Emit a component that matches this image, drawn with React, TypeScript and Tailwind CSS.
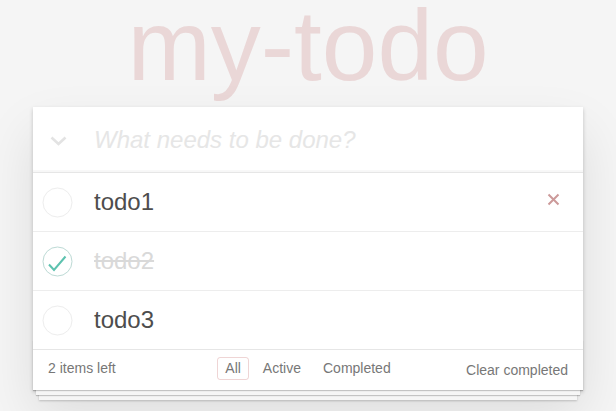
import { useState } from "react";

type Todo = { id: number; title: string; completed: boolean };

export default function App() {
  const [todos, setTodos] = useState<Todo[]>([
    { id: 1, title: "todo1", completed: false },
    { id: 2, title: "todo2", completed: true },
    { id: 3, title: "todo3", completed: false },
  ]);
  // the first row is shown in its hover state
  const [hovered, setHovered] = useState(1);

  const left = todos.filter((t) => !t.completed).length;

  const toggle = (id: number) =>
    setTodos(todos.map((t) => (t.id === id ? { ...t, completed: !t.completed } : t)));

  return (
    <div className="min-h-[416px] bg-[#f5f5f5] font-['Liberation_Sans',Arial,sans-serif] text-[#4d4d4d]">
      <h1 className="-mt-[5px] text-center text-[100px] leading-[100px] font-normal text-[rgba(175,47,47,0.15)]">
        my-todo
      </h1>

      <section className="relative mx-auto mt-[12px] w-[550px] bg-white shadow-[0_2px_4px_0_rgba(0,0,0,0.2),0_25px_50px_0_rgba(0,0,0,0.1)]">
        {/* New todo input */}
        <header className="flex h-[65px] items-center shadow-[inset_0_-2px_1px_rgba(0,0,0,0.03)]">
          <div className="flex w-[60px] shrink-0 pl-[17px] pt-[2px]">
            <svg width="17" height="10" viewBox="0 0 17 10">
              <polyline
                points="1.5,1.5 8.5,8 15.5,1.5"
                fill="none"
                stroke="#e3e3e3"
                strokeWidth="2.6"
              />
            </svg>
          </div>
          <input
            className="h-full w-full bg-transparent pl-[1px] pr-4 text-[24px] leading-[33.6px] text-[#4d4d4d] outline-none placeholder:italic placeholder:text-[#e6e6e6]"
            placeholder="What needs to be done?"
          />
        </header>

        {/* Todo list */}
        <ul className="border-t border-[#e6e6e6]">
          {todos.map((todo, i) => (
            <li
              key={todo.id}
              onMouseEnter={() => setHovered(todo.id)}
              className={`flex items-center ${
                i < todos.length - 1 ? "h-[59px] border-b border-[#ededed]" : "h-[58px]"
              }`}
            >
              <div className="w-[60px] shrink-0 pl-[9px]">
                <svg width="31" height="31" viewBox="0 0 31 31" onClick={() => toggle(todo.id)}>
                  <circle
                    cx="15.5"
                    cy="15.5"
                    r="14.5"
                    fill="none"
                    stroke={todo.completed ? "#bddad5" : "#ededed"}
                    strokeWidth="1"
                  />
                  {todo.completed && (
                    <polyline
                      points="7,18.5 12,24 23.5,10.5"
                      fill="none"
                      stroke="#5dc2af"
                      strokeWidth="2"
                    />
                  )}
                </svg>
              </div>
              <label
                className={`flex-1 pl-[1px] text-[24px] leading-[28.8px] ${
                  todo.completed ? "text-[#d9d9d9] line-through" : "text-[#4d4d4d]"
                }`}
              >
                {todo.title}
              </label>
              {hovered === todo.id && (
                <button className="mb-[6px] mr-[23px]">
                  <svg width="13" height="13" viewBox="0 0 13 13">
                    <path d="M1.5 1.5 L11.5 11.5 M11.5 1.5 L1.5 11.5" stroke="#cc9a9a" strokeWidth="2" />
                  </svg>
                </button>
              )}
            </li>
          ))}
        </ul>

        {/* Footer */}
        <footer className="relative grid h-[41px] grid-cols-[1fr_auto_1fr] items-start border-t border-[#e6e6e6] px-[15px] text-[14px] text-[#777]">
          <div className="pointer-events-none absolute bottom-0 left-0 right-0 h-[50px] shadow-[0_1px_1px_rgba(0,0,0,0.2),0_8px_0_-3px_#f6f6f6,0_9px_1px_-3px_rgba(0,0,0,0.2),0_16px_0_-6px_#f6f6f6,0_17px_2px_-6px_rgba(0,0,0,0.2)]" />
          <span className="mt-[10px] leading-[17px]">{left} items left</span>
          <ul className="mt-[7px] flex gap-[6px]">
            <li>
              <a className="block rounded-[3px] border border-[rgba(175,47,47,0.2)] px-[7px] py-[3px] leading-[15px]">
                All
              </a>
            </li>
            <li>
              <a className="block rounded-[3px] border border-transparent px-[7px] py-[3px] leading-[15px]">
                Active
              </a>
            </li>
            <li>
              <a className="block rounded-[3px] border border-transparent px-[7px] py-[3px] leading-[15px]">
                Completed
              </a>
            </li>
          </ul>
          <button className="mt-[12px] justify-self-end leading-[17px]">Clear completed</button>
        </footer>
      </section>
    </div>
  );
}
